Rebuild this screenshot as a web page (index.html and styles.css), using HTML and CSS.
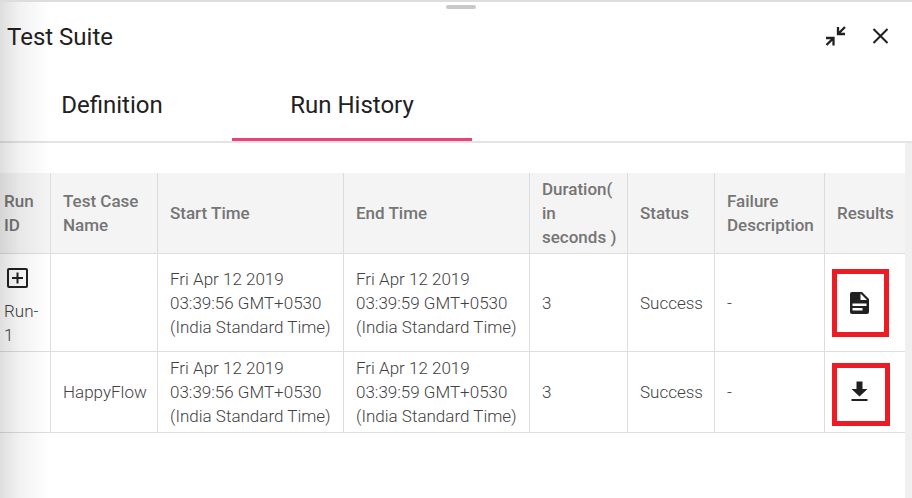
FILE: index.html
```html
<!DOCTYPE html>
<html lang="en">
<head>
  <meta charset="UTF-8" />
  <meta name="viewport" content="width=device-width, initial-scale=1" />
  <title>Test Suite</title>
  <link rel="stylesheet" href="styles.css">
</head>
<body>
  <div class="panel">
    <div class="handle"></div>

    <header class="header">
      <h1 class="title">Test Suite</h1>
      <div class="actions">
        <button class="icon-button" aria-label="Collapse">
          <svg width="24" height="24" viewBox="0 0 24 24" fill="none" stroke="#212121" stroke-width="2.3">
            <path d="M21 2l-7 7M14 2v7h7M2.5 20l7-7M2 13h7.5v7.5" />
          </svg>
        </button>
        <button class="icon-button" aria-label="Close">
          <svg width="24" height="24" viewBox="0 0 24 24" fill="none" stroke="#212121" stroke-width="2.1">
            <path d="M4.5 4l14 14M18.5 4l-14 14" />
          </svg>
        </button>
      </div>
    </header>

    <nav class="tabs">
      <button class="tab">Definition</button>
      <button class="tab active">Run History</button>
    </nav>

    <main class="content">
      <table class="runs">
        <colgroup>
          <col class="col-run">
          <col class="col-case">
          <col class="col-time">
          <col class="col-time">
          <col class="col-duration">
          <col class="col-status">
          <col class="col-failure">
          <col>
        </colgroup>
        <thead>
          <tr>
            <th>Run ID</th>
            <th>Test Case Name</th>
            <th>Start Time</th>
            <th>End Time</th>
            <th>Duration( in seconds&nbsp;)</th>
            <th>Status</th>
            <th>Failure Description</th>
            <th>Results</th>
          </tr>
        </thead>
        <tbody>
          <tr>
            <td>
              <button class="icon-button expand" aria-label="Expand run">
                <svg width="26" height="26" viewBox="0 0 26 26" fill="none" stroke="#212121" stroke-width="2">
                  <rect x="4" y="4" width="19" height="18" rx="1" />
                  <path d="M13.5 7.5v11M8 13h11" />
                </svg>
              </button>
              Run-1
            </td>
            <td></td>
            <td>Fri Apr 12 2019 03:39:56 GMT+0530 (India Standard Time)</td>
            <td>Fri Apr 12 2019 03:39:59 GMT+0530 (India Standard Time)</td>
            <td>3</td>
            <td>Success</td>
            <td>-</td>
            <td class="result">
              <button class="result-button report" aria-label="View report">
                <svg width="24" height="24" viewBox="0 0 24 24">
                  <path fill="#212121" d="M4 1h10l7 7v13a2 2 0 0 1-2 2H4a2 2 0 0 1-2-2V3a2 2 0 0 1 2-2z" />
                  <path fill="#fff" d="M12.5 2.5V9h6.5zM4.5 12.5h14v2.500h-14zM4.500 17h10v2.500h-10z" />
                </svg>
              </button>
            </td>
          </tr>
          <tr>
            <td></td>
            <td>HappyFlow</td>
            <td>Fri Apr 12 2019 03:39:56 GMT+0530 (India Standard Time)</td>
            <td>Fri Apr 12 2019 03:39:59 GMT+0530 (India Standard Time)</td>
            <td>3</td>
            <td>Success</td>
            <td>-</td>
            <td class="result">
              <button class="result-button download" aria-label="Download result">
                <svg width="24" height="24" viewBox="0 0 24 24" fill="#212121">
                  <path d="M8.5 1.5h6V9h5l-8 7.5-8-7.5h5zM3.5 19h16v2h-16z" />
                </svg>
              </button>
            </td>
          </tr>
        </tbody>
      </table>
    </main>

    <div class="edge-shadow"></div>
  </div>
</body>
</html>
```
FILE: styles.css
```css
* {
  box-sizing: border-box;
}
body {
  margin: 0;
  background-color: #fff;
  color: #212121;
  font-family: Roboto, "Liberation Sans", sans-serif;
}
button {
  padding: 0;
  border: none;
  background: none;
  color: inherit;
  font-family: inherit;
  cursor: pointer;
}
svg {
  display: block;
}
.panel {
  position: relative;
  display: flex;
  flex-direction: column;
  min-height: 100vh;
  border-top: 2px solid #ddd;
  overflow: hidden;
}
.handle {
  width: 30px;
  height: 4px;
  margin: 3px auto 0 446px;
  border-radius: 2px;
  background-color: #c8c8c8;
}
.header {
  display: flex;
  justify-content: space-between;
  align-items: center;
  height: 56px;
  padding: 0 19px 0 7px;
}
.title {
  margin: 0;
  font-size: 24px;
  font-weight: 400;
}
.actions {
  display: flex;
  gap: 21px;
}
.tabs {
  display: flex;
  height: 78px;
  margin-left: -8px;
  border-bottom: 2px solid #e4e4e4;
}
.tab {
  width: 240px;
  padding-top: 4px;
  border-top: 3px solid transparent;
  border-bottom: 3px solid transparent;
  font-size: 24px;
}
.tab.active {
  border-bottom-color: #ec407a;
}
.content {
  flex: 1;
  padding-top: 30px;
  border-right: 7px solid #f0f0f0;
}
.runs {
  width: 100%;
  table-layout: fixed;
  border-spacing: 0;
  font-size: 17px;
  line-height: 24px;
  text-align: left;
}
.col-run {
  width: 51px;
}
.col-case {
  width: 107px;
}
.col-time {
  width: 186px;
}
.col-duration {
  width: 98px;
}
.col-status {
  width: 87px;
}
.col-failure {
  width: 110px;
}
th, td {
  padding: 4px 8px 4px 12px;
  border-right: 1px solid #ddd;
  border-bottom: 1px solid #ddd;
}
th {
  background-color: #f4f4f4;
  color: #757575;
  font-weight: 500;
}
td {
  color: #424242;
  font-weight: 300;
}
th:first-child, td:first-child {
  padding-left: 4px;
}
th:last-child, td:last-child {
  border-right: none;
}
.expand {
  display: block;
  margin: 7px 0 8px;
}
td.result {
  padding-left: 7px;
}
.result-button {
  display: block;
  border: 5px solid #ed1c24;
}
.report {
  padding: 17px 12px 17px 11px;
}
.download {
  padding: 12px 13px 17px 11px;
  margin-top: 4px;
}
.edge-shadow {
  position: absolute;
  top: 0;
  bottom: 0;
  left: 0;
  width: 50px;
  background: linear-gradient(to right, rgba(0, 0, 0, 0.13), rgba(0, 0, 0, 0.05) 40%, transparent);
  pointer-events: none;
}
```
